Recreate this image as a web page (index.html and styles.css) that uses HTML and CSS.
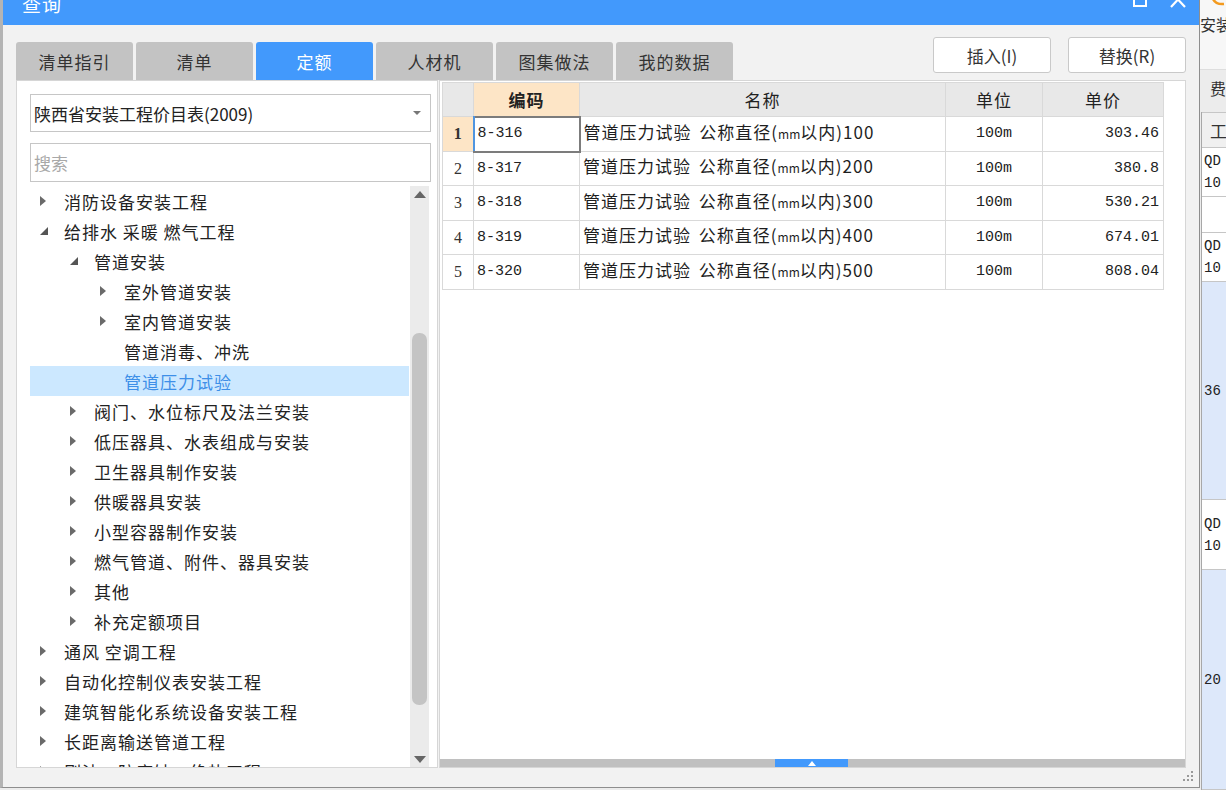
FILE: index.html
```html
<!DOCTYPE html>
<html lang="zh-CN">
<head>
<meta charset="utf-8">
<title>查询</title>
<link rel="stylesheet" href="styles.css">
</head>
<body>
<div class="screen">
  <div class="dialog">
    <div class="titlebar">
      <div class="title">查询</div>
      <div class="winbtns">
        <svg class="wb-max" width="16" height="8" viewBox="0 0 16 8"><rect x="2" y="-7" width="12" height="13" fill="none" stroke="#fff" stroke-width="2"/></svg>
        <svg class="wb-close" width="16" height="8" viewBox="0 0 16 8"><path d="M1 -8 L15 7 M15 -8 L1 7" stroke="#fff" stroke-width="2.2"/></svg>
      </div>
    </div>
    <div class="dbody">
      <div class="toprow">
        <div class="tabs">
          <div class="tab">清单指引</div>
          <div class="tab">清单</div>
          <div class="tab active">定额</div>
          <div class="tab">人材机</div>
          <div class="tab">图集做法</div>
          <div class="tab">我的数据</div>
        </div>
        <div class="actions">
          <div class="btn">插入(I)</div>
          <div class="btn">替换(R)</div>
        </div>
      </div>
      <div class="content">
        <div class="leftpanel">
          <div class="select">
            <span>陕西省安装工程价目表(2009)</span>
            <svg width="8" height="4" viewBox="0 0 8 4"><path d="M0 0 L8 0 L4 4 Z" fill="#777"/></svg>
          </div>
          <div class="search">搜索</div>
          <div class="tree">
            <div class="treelist">
              <div class="row l0"><span class="tw"><i class="tri-r"></i></span>消防设备安装工程</div>
              <div class="row l0"><span class="tw"><svg width="8" height="8" viewBox="0 0 8 8"><path d="M8 0 L8 8 L0 8 Z" fill="#555"/></svg></span>给排水 采暖 燃气工程</div>
              <div class="row l1"><span class="tw"><svg width="8" height="8" viewBox="0 0 8 8"><path d="M8 0 L8 8 L0 8 Z" fill="#555"/></svg></span>管道安装</div>
              <div class="row l2"><span class="tw"><i class="tri-r"></i></span>室外管道安装</div>
              <div class="row l2"><span class="tw"><i class="tri-r"></i></span>室内管道安装</div>
              <div class="row l2"><span class="tw"></span>管道消毒、冲洗</div>
              <div class="row l2 sel"><span class="tw"></span>管道压力试验</div>
              <div class="row l1"><span class="tw"><i class="tri-r"></i></span>阀门、水位标尺及法兰安装</div>
              <div class="row l1"><span class="tw"><i class="tri-r"></i></span>低压器具、水表组成与安装</div>
              <div class="row l1"><span class="tw"><i class="tri-r"></i></span>卫生器具制作安装</div>
              <div class="row l1"><span class="tw"><i class="tri-r"></i></span>供暖器具安装</div>
              <div class="row l1"><span class="tw"><i class="tri-r"></i></span>小型容器制作安装</div>
              <div class="row l1"><span class="tw"><i class="tri-r"></i></span>燃气管道、附件、器具安装</div>
              <div class="row l1"><span class="tw"><i class="tri-r"></i></span>其他</div>
              <div class="row l1"><span class="tw"><i class="tri-r"></i></span>补充定额项目</div>
              <div class="row l0"><span class="tw"><i class="tri-r"></i></span>通风 空调工程</div>
              <div class="row l0"><span class="tw"><i class="tri-r"></i></span>自动化控制仪表安装工程</div>
              <div class="row l0"><span class="tw"><i class="tri-r"></i></span>建筑智能化系统设备安装工程</div>
              <div class="row l0"><span class="tw"><i class="tri-r"></i></span>长距离输送管道工程</div>
              <div class="row l0"><span class="tw"><i class="tri-r"></i></span>刷油、防腐蚀、绝热工程</div>
            </div>
            <div class="vscroll">
              <svg class="arr-up" width="12" height="7" viewBox="0 0 12 7"><path d="M0 7 L6 0 L12 7 Z" fill="#666"/></svg>
              <div class="vthumb"></div>
              <svg class="arr-dn" width="12" height="7" viewBox="0 0 12 7"><path d="M0 0 L12 0 L6 7 Z" fill="#666"/></svg>
            </div>
          </div>
        </div>
        <div class="tablepanel">
          <div class="tablewrap">
            <table class="grid">
              <colgroup>
                <col class="c-num"><col class="c-code"><col class="c-name"><col class="c-unit"><col class="c-price">
              </colgroup>
              <thead>
                <tr><th class="hnum"></th><th class="hsel">编码</th><th>名称</th><th>单位</th><th>单价</th></tr>
              </thead>
              <tbody>
                <tr><td class="num cur">1</td><td class="code focus">8-316</td><td class="name">管道压力试验 公称直径(<span class="mm">mm</span>以内)100</td><td class="unit">100m</td><td class="price">303.46</td></tr>
                <tr class="s"><td class="num">2</td><td class="code">8-317</td><td class="name">管道压力试验 公称直径(<span class="mm">mm</span>以内)200</td><td class="unit">100m</td><td class="price">380.8</td></tr>
                <tr><td class="num">3</td><td class="code">8-318</td><td class="name">管道压力试验 公称直径(<span class="mm">mm</span>以内)300</td><td class="unit">100m</td><td class="price">530.21</td></tr>
                <tr class="s"><td class="num">4</td><td class="code">8-319</td><td class="name">管道压力试验 公称直径(<span class="mm">mm</span>以内)400</td><td class="unit">100m</td><td class="price">674.01</td></tr>
                <tr><td class="num">5</td><td class="code">8-320</td><td class="name">管道压力试验 公称直径(<span class="mm">mm</span>以内)500</td><td class="unit">100m</td><td class="price">808.04</td></tr>
              </tbody>
            </table>
          </div>
          <div class="hscroll">
            <div class="hthumb"><svg width="8" height="5" viewBox="0 0 8 5"><path d="M0 5 L4 0 L8 5 Z" fill="#fff"/></svg></div>
          </div>
        </div>
      </div>
      <div class="footer">
        <svg class="grip" width="12" height="12" viewBox="0 0 12 12">
          <rect x="9" y="1" width="2" height="2" fill="#999"/>
          <rect x="5" y="5" width="2" height="2" fill="#999"/><rect x="9" y="5" width="2" height="2" fill="#999"/>
          <rect x="1" y="9" width="2" height="2" fill="#999"/><rect x="5" y="9" width="2" height="2" fill="#999"/><rect x="9" y="9" width="2" height="2" fill="#999"/>
        </svg>
      </div>
    </div>
  </div>
  <div class="app">
    <div class="app-top">
      <svg class="app-icon" width="14" height="6" viewBox="0 0 14 6"><path d="M1 -4 Q3 5 13 4" fill="none" stroke="#f39a1e" stroke-width="2.5"/></svg>
      <div class="app-label">安装</div>
    </div>
    <div class="app-fee">费</div>
    <div class="app-table">
      <div class="app-th">工</div>
      <div class="app-tr h49">QD<br>10</div>
      <div class="app-tr h36"></div>
      <div class="app-tr h49">QD<br>10</div>
      <div class="app-tr blue h218">36</div>
      <div class="app-tr h70">QD<br>10</div>
      <div class="app-tr blue h220">20</div>
    </div>
  </div>
</div>
</body>
</html>
```

FILE: styles.css
```css
* { box-sizing: border-box; }
html, body { margin: 0; padding: 0; }
body {
  width: 1226px;
  height: 790px;
  overflow: hidden;
  background: #ececec;
  font-family: "Noto Sans CJK SC", "Microsoft YaHei", sans-serif;
  color: #222;
}
.screen { display: flex; align-items: flex-start; height: 790px; }

.dialog {
  width: 1200px;
  height: 788px;
  flex: none;
  display: flex;
  flex-direction: column;
  background: #f2f2f2;
  border-left: 3px solid #b4b4b4;
  border-right: 1px solid #8e8e8e;
  border-bottom: 1px solid #8e8e8e;
}

.titlebar {
  height: 25px;
  flex: none;
  background: #4299fc;
  display: flex;
  align-items: flex-start;
  padding: 0 13px 0 19px;
  overflow: hidden;
}
.title {
  color: #fff;
  font-size: 19px;
  line-height: 24px;
  margin-top: -8px;
  letter-spacing: 1px;
}
.winbtns { margin-left: auto; display: flex; gap: 22px; }
.winbtns svg { display: block; }

.dbody {
  flex: 1;
  display: flex;
  flex-direction: column;
  padding: 0 13px;
}

.toprow {
  height: 55px;
  flex: none;
  display: flex;
  justify-content: space-between;
}
.tabs { display: flex; gap: 3px; align-self: flex-end; }
.tab {
  width: 117px;
  height: 38px;
  background: #c3c3c3;
  border-radius: 3px 3px 0 0;
  display: flex;
  align-items: center;
  justify-content: center;
  font-size: 17px;
  letter-spacing: 1px;
  color: #333;
}
.tab.active { background: #4299fc; color: #fff; }
.actions { display: flex; gap: 17px; margin-top: 12px; }
.btn {
  width: 118px;
  height: 36px;
  background: #fff;
  border: 1px solid #c9c9c9;
  border-radius: 3px;
  display: flex;
  align-items: center;
  justify-content: center;
  font-size: 17px;
  color: #333;
}

.content {
  height: 688px;
  flex: none;
  display: flex;
  gap: 1px;
}

.leftpanel {
  width: 422px;
  flex: none;
  background: #fff;
  border: 1px solid #d6d6d6;
  padding: 13px 6px 0 13px;
  display: flex;
  flex-direction: column;
}
.select {
  height: 38px;
  flex: none;
  border: 1px solid #c6c6c6;
  display: flex;
  align-items: center;
  justify-content: space-between;
  padding: 0 9px 0 3px;
  font-size: 17px;
  color: #222;
}
.select svg { display: block; }
.search {
  height: 39px;
  flex: none;
  margin-top: 11px;
  border: 1px solid #c6c6c6;
  display: flex;
  align-items: center;
  padding-left: 3px;
  font-size: 17px;
  color: #a8a8a8;
}
.tree {
  flex: 1;
  margin-top: 4px;
  display: flex;
  overflow: hidden;
  min-height: 0;
}
.treelist {
  width: 379px;
  flex: none;
  overflow: hidden;
}
.row {
  height: 30px;
  display: flex;
  align-items: center;
  font-size: 17px;
  letter-spacing: 1px;
  color: #222;
  white-space: nowrap;
}
.row.l0 { padding-left: 10px; }
.row.l1 { padding-left: 40px; }
.row.l2 { padding-left: 70px; }
.row.sel { background: #cce8ff; color: #3d8fe8; }
.tw { width: 24px; flex: none; display: flex; align-items: center; }
.tw svg { display: block; }
.tri-r {
  display: block;
  width: 0;
  height: 0;
  border-left: 6px solid #6a6a6a;
  border-top: 5.5px solid transparent;
  border-bottom: 5.5px solid transparent;
}

.vscroll {
  width: 19px;
  flex: none;
  margin-left: 1px;
  background: #ebebeb;
  display: flex;
  flex-direction: column;
  align-items: center;
}
.arr-up { margin-top: 5px; display: block; }
.vthumb {
  width: 15px;
  height: 372px;
  margin-top: 135px;
  background: #c4c4c4;
  border-radius: 7px;
}
.arr-dn { margin-top: auto; margin-bottom: 4px; display: block; }

.tablepanel {
  width: 747px;
  flex: none;
  background: #fff;
  border: 1px solid #d6d6d6;
  display: flex;
  flex-direction: column;
}
.tablewrap { flex: 1; padding: 1px 0 0 2px; }
.grid {
  border-collapse: collapse;
  table-layout: fixed;
  width: 721px;
}
.c-num { width: 31px; }
.c-code { width: 106px; }
.c-name { width: 366px; }
.c-unit { width: 97px; }
.c-price { width: 121px; }
.grid th, .grid td {
  border: 1px solid #d9d9d9;
  padding: 0;
  white-space: nowrap;
  overflow: hidden;
  vertical-align: middle;
}
.grid th {
  height: 34px;
  background: #e8e8e8;
  font-weight: normal;
  font-size: 17px;
  color: #222;
  letter-spacing: 1px;
}
.grid th.hsel { background: #fde5c6; font-weight: bold; }
.grid td { height: 35px; font-size: 15px; line-height: 20px; }
.grid tr.s td { height: 34px; }
.grid td.num {
  text-align: center;
  font-family: "Liberation Serif", serif;
  font-size: 16px;
  color: #333;
}
.grid td.num.cur { background: #fde5c6; font-weight: bold; }
.grid td.code {
  font-family: "Liberation Mono", monospace;
  font-size: 15px;
  padding-left: 3px;
  color: #222;
}
.grid td.code.focus {
  border: 2px solid #7c7c7c;
  border-left-color: #4f95e0;
}
.grid td.name {
  font-size: 17px;
  letter-spacing: 1px;
  word-spacing: 3px;
  padding-left: 3px;
  padding-bottom: 3px;
  color: #1e1e1e;
}
.mm { font-size: 12px; letter-spacing: 0; }
.grid td.unit {
  text-align: center;
  font-family: "Liberation Mono", monospace;
  font-size: 15px;
}
.grid td.price {
  text-align: right;
  font-family: "Liberation Mono", monospace;
  font-size: 15px;
  padding-right: 4px;
}

.hscroll {
  height: 8px;
  flex: none;
  background: #c0c0c0;
  padding-left: 335px;
}
.hthumb {
  width: 73px;
  height: 8px;
  background: #4299fc;
  display: flex;
  align-items: center;
  justify-content: center;
}
.hthumb svg { display: block; }

.footer {
  flex: 1;
  display: flex;
  justify-content: flex-end;
  align-items: flex-start;
}
.grip { display: block; margin-top: 2px; margin-right: -8px; }

.app {
  width: 26px;
  flex: none;
  height: 790px;
  overflow: hidden;
  display: flex;
  flex-direction: column;
  background: #ececec;
}
.app-top {
  height: 70px;
  flex: none;
  background: #f7f7f7;
  border-bottom: 1px solid #dedede;
  overflow: hidden;
}
.app-icon { display: block; margin-left: 11px; }
.app-label {
  margin-top: 8px;
  font-size: 16px;
  line-height: 20px;
  white-space: nowrap;
  color: #333;
}
.app-fee {
  height: 42px;
  flex: none;
  padding-left: 10px;
  padding-top: 8px;
  font-size: 16px;
  line-height: 20px;
  color: #333;
}
.app-table {
  flex: 1;
  border-left: 1px solid #a8a8a8;
  margin-left: 1px;
  background: #fff;
}
.app-th {
  height: 36px;
  background: #f0f0f0;
  border-top: 1px solid #c6c6c6;
  border-bottom: 1px solid #c6c6c6;
  padding-left: 8px;
  display: flex;
  align-items: center;
  font-size: 17px;
  color: #333;
}
.app-tr {
  border-bottom: 1px solid #c6c6c6;
  display: flex;
  align-items: center;
  padding-left: 2px;
  font-family: "Liberation Mono", monospace;
  font-size: 14px;
  line-height: 22px;
  color: #222;
  white-space: nowrap;
}
.app-tr.blue { background: #dde8fa; }
.h36 { height: 36px; }
.h49 { height: 49px; }
.h70 { height: 70px; }
.h218 { height: 218px; }
.h220 { height: 220px; }
```
